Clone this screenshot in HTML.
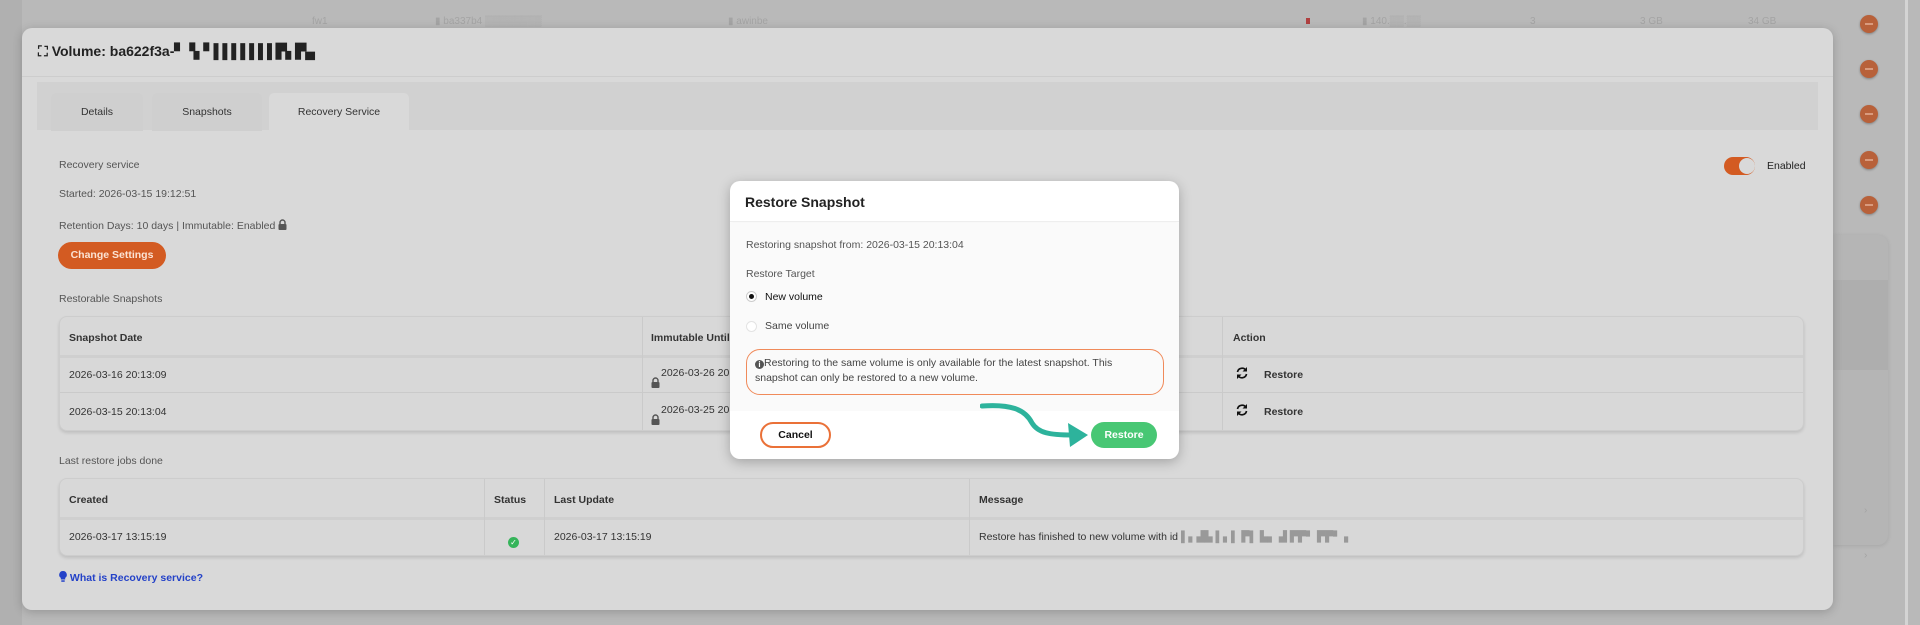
<!DOCTYPE html>
<html><head><meta charset="utf-8"><style>
*{box-sizing:border-box;margin:0;padding:0}
body{width:1920px;height:625px;overflow:hidden;background:#b9b9b9;font-family:"Liberation Sans",Arial,sans-serif;color:#333;position:relative;font-size:10.5px}
.abs{position:absolute}
.bgtxt{color:#a4a4a4;font-size:10px}
.dot{position:absolute;left:1860px;width:18px;height:18px;border-radius:50%;background:#b8613a;box-shadow:0 1px 2px rgba(0,0,0,.3)}
.dot:after{content:"";position:absolute;left:5px;top:8px;width:8px;height:2px;background:#d99a7d}
.modal{left:22px;top:28px;width:1811px;height:582px;background:#d9d9d9;border-radius:10px;box-shadow:0 2px 10px rgba(0,0,0,.2)}
.hdr{left:0;top:0;width:100%;height:49px;border-bottom:1px solid #cdcdcd}
.t{font-weight:bold;color:#222;font-size:10.5px}
.lbl{color:#555;font-size:10.5px}
.tab{top:65px;height:38px;background:#cfcfcf;border-radius:5px 5px 0 0;text-align:center;line-height:38px;font-size:10.5px;color:#333}
.tbl{background:#d8d8d8;border:1px solid #cdcdcd;border-radius:8px;box-shadow:0 2px 3px rgba(0,0,0,.12)}
.row{position:absolute;left:0;width:100%;border-top:1px solid #cacaca}
.cell{position:absolute;font-size:10.5px;color:#333}
.vl{position:absolute;top:0;bottom:0;width:1px;background:#cacaca}
.dlg{left:730px;top:181px;width:449px;height:278px;background:#fff;border-radius:10px;box-shadow:0 3px 12px rgba(0,0,0,.25);overflow:hidden}
</style></head><body>
<div class="abs" style="left:0;top:0;width:22px;height:625px;background:#b0b0b0"></div>
<div class="abs bgtxt" style="left:312px;top:16px">fw1</div>
<div class="abs bgtxt" style="left:435px;top:16px">▮ ba337b4 ▒▒▒▒▒▒▒▒</div>
<div class="abs bgtxt" style="left:728px;top:16px">▮ awinbe</div>
<div class="abs" style="left:1306px;top:18px;width:4px;height:6px;background:#b04040"></div>
<div class="abs bgtxt" style="left:1362px;top:16px">▮ 140.▒▒.▒▒</div>
<div class="abs bgtxt" style="left:1530px;top:16px">3</div>
<div class="abs bgtxt" style="left:1640px;top:16px">3 GB</div>
<div class="abs bgtxt" style="left:1748px;top:16px">34 GB</div>
<div class="dot" style="top:15px"></div>
<div class="dot" style="top:60px"></div>
<div class="dot" style="top:105px"></div>
<div class="dot" style="top:151px"></div>
<div class="dot" style="top:196px"></div>
<div class="dot" style="top:241px"></div>
<div class="abs" style="left:1833px;top:235px;width:55px;height:310px;background:#b5b5b5;border-radius:0 10px 10px 0;box-shadow:0 1px 4px rgba(0,0,0,.1)"></div>
<div class="abs" style="left:1833px;top:280px;width:55px;height:90px;background:#aeaeae"></div>
<div class="abs bgtxt" style="left:1864px;top:505px">›</div>
<div class="abs bgtxt" style="left:1864px;top:550px">›</div>
<div class="abs" style="left:1905px;top:0;width:3px;height:625px;background:#d4d4d4"></div>

<div class="abs modal">
 <div class="abs hdr"></div>
 <div class="abs" style="left:16px;top:15px;font-size:14px;font-weight:bold;color:#222">⛶ Volume: ba622f3a-<span style="letter-spacing:-1px">▘▝▖▘▌▌▌▌▌▌▌▛▖▛▄</span></div>
 <div class="abs" style="left:15px;top:54px;width:1781px;height:48px;background:#d1d1d1"></div>
 <div class="abs tab" style="left:29px;width:92px">Details</div>
 <div class="abs tab" style="left:130px;width:110px">Snapshots</div>
 <div class="abs tab" style="left:247px;width:140px;background:#d9d9d9">Recovery Service</div>

 <div class="abs lbl" style="left:37px;top:131px">Recovery service</div>
 <div class="abs lbl" style="left:37px;top:160px">Started: 2026-03-15 19:12:51</div>
 <div class="abs lbl" style="left:37px;top:191px">Retention Days: 10 days | Immutable: Enabled <svg width="9" height="11" viewBox="0 0 9 11" style="vertical-align:-1px"><path d="M2 5V3.5a2.5 2.5 0 0 1 5 0V5" stroke="#555" stroke-width="1.4" fill="none"/><rect x="0.5" y="5" width="8" height="6" rx="1" fill="#555"/></svg></div>
 <div class="abs" style="left:36px;top:214px;width:108px;height:27px;border-radius:14px;background:#d35b22;color:#fbe3d4;font-weight:bold;font-size:10.5px;text-align:center;line-height:27px">Change Settings</div>
 <div class="abs lbl" style="left:37px;top:265px">Restorable Snapshots</div>

 <div class="abs" style="left:1702px;top:129px;width:31px;height:18px;border-radius:9px;background:#d35b22"></div>
 <div class="abs" style="left:1717px;top:130px;width:16px;height:16px;border-radius:50%;background:#d9d9d9"></div>
 <div class="abs t" style="left:1745px;top:132px;font-weight:normal;color:#222">Enabled</div>

 <div class="abs tbl" style="left:37px;top:288px;width:1745px;height:115px">
  <div class="row" style="top:38px;border-top:3px solid #cfcfcf"></div>
  <div class="row" style="top:75px"></div>
  <div class="vl" style="left:582px"></div><div class="vl" style="left:1162px"></div>
  <div class="cell t" style="left:9px;top:15px">Snapshot Date</div>
  <div class="cell t" style="left:591px;top:15px">Immutable Until</div>
  <div class="cell t" style="left:1173px;top:15px">Action</div>
  <div class="cell" style="left:9px;top:52px">2026-03-16 20:13:09</div>
  <div class="cell" style="left:9px;top:89px">2026-03-15 20:13:04</div>
  <svg class="abs" style="left:591px;top:60px" width="9" height="11" viewBox="0 0 9 11"><path d="M2 5V3.5a2.5 2.5 0 0 1 5 0V5" stroke="#555" stroke-width="1.4" fill="none"/><rect x="0.5" y="5" width="8" height="6" rx="1" fill="#555"/></svg>
  <svg class="abs" style="left:591px;top:97px" width="9" height="11" viewBox="0 0 9 11"><path d="M2 5V3.5a2.5 2.5 0 0 1 5 0V5" stroke="#555" stroke-width="1.4" fill="none"/><rect x="0.5" y="5" width="8" height="6" rx="1" fill="#555"/></svg>
  <div class="cell" style="left:601px;top:50px">2026-03-26 20</div>
  <div class="cell" style="left:601px;top:87px">2026-03-25 20</div>
  <svg class="abs" style="left:1175px;top:49px" width="14" height="14" viewBox="0 0 14 14"><path d="M2.5 6A4.6 4.6 0 0 1 11 4.5M11.5 8A4.6 4.6 0 0 1 3 9.5" stroke="#111" stroke-width="1.7" fill="none"/><path d="M12 1v4.5H7.5z M2 13V8.5h4.5z" fill="#111"/></svg>
  <div class="cell t" style="left:1204px;top:52px">Restore</div>
  <svg class="abs" style="left:1175px;top:86px" width="14" height="14" viewBox="0 0 14 14"><path d="M2.5 6A4.6 4.6 0 0 1 11 4.5M11.5 8A4.6 4.6 0 0 1 3 9.5" stroke="#111" stroke-width="1.7" fill="none"/><path d="M12 1v4.5H7.5z M2 13V8.5h4.5z" fill="#111"/></svg>
  <div class="cell t" style="left:1204px;top:89px">Restore</div>
 </div>

 <div class="abs lbl" style="left:37px;top:427px">Last restore jobs done</div>
 <div class="abs tbl" style="left:37px;top:450px;width:1745px;height:78px">
  <div class="row" style="top:38px;border-top:3px solid #cfcfcf"></div>
  <div class="vl" style="left:424px"></div><div class="vl" style="left:484px"></div><div class="vl" style="left:909px"></div>
  <div class="cell t" style="left:9px;top:15px">Created</div>
  <div class="cell t" style="left:434px;top:15px">Status</div>
  <div class="cell t" style="left:494px;top:15px">Last Update</div>
  <div class="cell t" style="left:919px;top:15px">Message</div>
  <div class="cell" style="left:9px;top:52px">2026-03-17 13:15:19</div>
  <div class="abs" style="left:448px;top:58px;width:11px;height:11px;border-radius:50%;background:#35b45a;color:#fff;font-size:8px;text-align:center;line-height:11px">✓</div>
  <div class="cell" style="left:494px;top:52px">2026-03-17 13:15:19</div>
  <div class="cell" style="left:919px;top:52px">Restore has finished to new volume with id <span style="color:#999">▌▖▟▙ ▌▖▌ ▛▌ ▙▖ ▟ ▛▛▘ ▛▛▘ ▖</span></div>
 </div>
 <div class="abs" style="left:37px;top:543px;color:#2442c8;font-weight:bold;font-size:10.5px"><svg width="8" height="11" viewBox="0 0 8 11" style="vertical-align:-1px"><path d="M4 0a3.8 3.8 0 0 0-2.2 6.9V8.5h4.4V6.9A3.8 3.8 0 0 0 4 0z" fill="#2442c8"/><rect x="2.3" y="9.3" width="3.4" height="1.5" fill="#2442c8"/></svg> What is Recovery service?</div>
</div>

<div class="abs dlg">
 <div class="abs" style="left:0;top:0;width:100%;height:41px;border-bottom:1px solid #eee;box-shadow:0 2px 4px rgba(0,0,0,.04)"></div>
 <div class="abs" style="left:15px;top:13px;font-size:14px;font-weight:bold;color:#222">Restore Snapshot</div>
 <div class="abs" style="left:0;top:42px;width:100%;height:188px;background:#fafafa"></div>
 <div class="abs lbl" style="left:16px;top:58px">Restoring snapshot from: 2026-03-15 20:13:04</div>
 <div class="abs lbl" style="left:16px;top:87px">Restore Target</div>
 <div class="abs" style="left:16px;top:110px;width:11px;height:11px;border-radius:50%;border:1px solid #ccc;background:#fff"></div>
 <div class="abs" style="left:19px;top:113px;width:5px;height:5px;border-radius:50%;background:#111"></div>
 <div class="abs t" style="left:35px;top:110px;font-weight:normal;color:#111">New volume</div>
 <div class="abs" style="left:16px;top:140px;width:11px;height:11px;border-radius:50%;border:1px solid #e3e3e3;background:#fff"></div>
 <div class="abs" style="left:35px;top:139px;color:#444">Same volume</div>
 <div class="abs" style="left:16px;top:168px;width:418px;height:46px;border:1px solid #f08a5a;border-radius:14px;padding:6px 8px;font-size:10.5px;line-height:15px;color:#444"><span style="display:inline-block;width:9px;height:9px;border-radius:50%;background:#555;color:#fff;font-size:8px;line-height:9px;text-align:center;font-weight:bold;vertical-align:-1px">i</span>Restoring to the same volume is only available for the latest snapshot. This snapshot can only be restored to a new volume.</div>
 <div class="abs" style="left:30px;top:241px;width:71px;height:26px;border:2px solid #ea7138;border-radius:13px;text-align:center;line-height:22px;font-weight:bold;color:#111;font-size:10.5px">Cancel</div>
 <div class="abs" style="left:361px;top:241px;width:66px;height:26px;background:#48c774;border-radius:13px;text-align:center;line-height:26px;font-weight:bold;color:#fff;font-size:10.5px">Restore</div>
 <svg class="abs" style="left:250px;top:220px" width="115" height="50" viewBox="0 0 115 50"><path d="M2 5 C30 3 45 8 52 22 C58 32 70 34 92 34" stroke="#2db39c" stroke-width="5" fill="none" stroke-linecap="round"/><path d="M88 22 L108 34 L90 46 Z" fill="#2db39c"/></svg>
</div>
</body></html>
